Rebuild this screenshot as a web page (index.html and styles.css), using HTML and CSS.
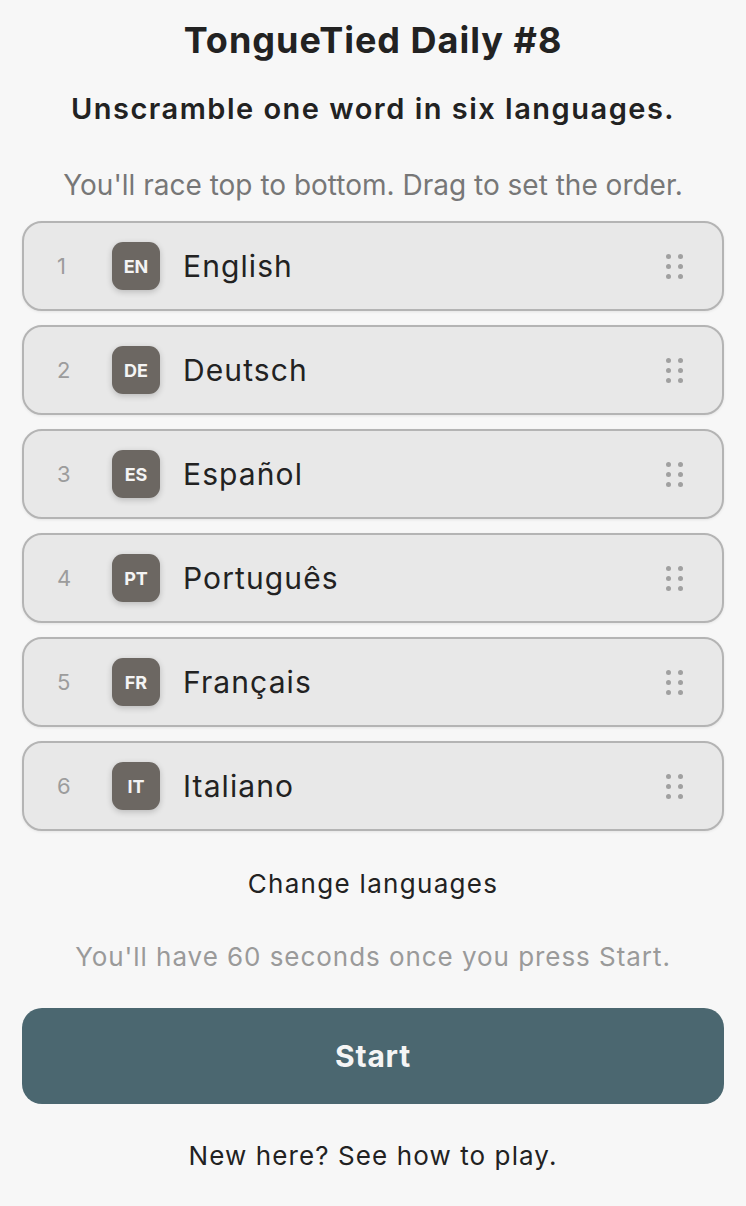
FILE: index.html
```html
<!DOCTYPE html>
<html lang="en">
<head>
<meta charset="utf-8">
<title>TongueTied Daily #8</title>
<link rel="stylesheet" href="styles.css">
</head>
<body>
<main class="page">
  <h1 class="title">TongueTied Daily #8</h1>
  <p class="subtitle">Unscramble one word in six languages.</p>
  <p class="hint">You'll race top to bottom. Drag to set the order.</p>
  <ol class="langs">
    <li class="lang"><span class="num">1</span><span class="badge">EN</span><span class="name">English</span><span class="grip"><i></i><i></i><i></i><i></i><i></i><i></i></span></li>
    <li class="lang"><span class="num">2</span><span class="badge">DE</span><span class="name">Deutsch</span><span class="grip"><i></i><i></i><i></i><i></i><i></i><i></i></span></li>
    <li class="lang"><span class="num">3</span><span class="badge">ES</span><span class="name">Español</span><span class="grip"><i></i><i></i><i></i><i></i><i></i><i></i></span></li>
    <li class="lang"><span class="num">4</span><span class="badge">PT</span><span class="name">Português</span><span class="grip"><i></i><i></i><i></i><i></i><i></i><i></i></span></li>
    <li class="lang"><span class="num">5</span><span class="badge">FR</span><span class="name">Français</span><span class="grip"><i></i><i></i><i></i><i></i><i></i><i></i></span></li>
    <li class="lang"><span class="num">6</span><span class="badge">IT</span><span class="name">Italiano</span><span class="grip"><i></i><i></i><i></i><i></i><i></i><i></i></span></li>
  </ol>
  <p class="change">Change languages</p>
  <p class="timer">You'll have 60 seconds once you press Start.</p>
  <button class="start">Start</button>
  <p class="howto">New here? See how to play.</p>
</main>
</body>
</html>
```
FILE: styles.css
```css
* { box-sizing: border-box; }
html, body { margin: 0; padding: 0; background: #f7f7f7; }
body { font-family: Inter, "Noto Sans", sans-serif; color: #222; }
.page {
  padding: 18px 22px 0;
  display: flex;
  flex-direction: column;
  align-items: stretch;
}
.title {
  margin: 0;
  text-align: center;
  font-size: 36px;
  font-weight: 700;
  line-height: 44px;
  letter-spacing: 1px;
  color: #222;
}
.subtitle {
  margin: 28.5px 0 0;
  text-align: center;
  font-size: 29px;
  font-weight: 600;
  line-height: 36px;
  letter-spacing: 1.5px;
  color: #222;
}
.hint {
  margin: 41.4px 0 0;
  text-align: center;
  font-size: 28px;
  line-height: 34px;
  color: #777;
}
.langs {
  list-style: none;
  margin: 19.2px 0 0;
  padding: 0;
  display: flex;
  flex-direction: column;
  gap: 14px;
}
.lang {
  height: 90px;
  border: 2px solid #b4b4b4;
  border-radius: 20px;
  background: #e8e8e8;
  box-shadow: 0 1px 3px rgba(0,0,0,0.08);
  display: flex;
  align-items: center;
  padding: 0 39px 0 0;
}
.num {
  width: 88px;
  padding-left: 33px;
  font-size: 22px;
  color: #9c9c9c;
}
.badge {
  width: 48px;
  height: 48px;
  border-radius: 11px;
  background: #6c6762;
  color: #f4f4f4;
  font-size: 18px;
  font-weight: 700;
  display: flex;
  align-items: center;
  justify-content: center;
  box-shadow: 0 2px 6px rgba(0,0,0,0.2);
}
.name {
  flex: 1;
  margin-left: 23px;
  font-size: 30px;
  letter-spacing: 1.1px;
  color: #222;
}
.grip {
  display: grid;
  grid-template-columns: 5px 5px;
  column-gap: 7px;
  row-gap: 5px;
}
.grip i {
  width: 5px;
  height: 5px;
  border-radius: 50%;
  background: #a0a0a0;
}
.change {
  margin: 36.5px 0 0;
  text-align: center;
  font-size: 26px;
  line-height: 32px;
  letter-spacing: 1.3px;
  color: #222;
}
.timer {
  margin: 41px 0 0;
  text-align: center;
  font-size: 26px;
  line-height: 32px;
  letter-spacing: 0.95px;
  color: #9a9a9a;
}
.start {
  margin: 35.5px 0 0;
  height: 96px;
  border: none;
  border-radius: 20px;
  background: #4b6770;
  color: #f5f5f5;
  font-family: inherit;
  font-size: 30px;
  font-weight: 700;
  letter-spacing: 0.8px;
}
.howto {
  margin: 35.5px 0 0;
  text-align: center;
  font-size: 26px;
  line-height: 32px;
  letter-spacing: 1.1px;
  color: #222;
}
```
